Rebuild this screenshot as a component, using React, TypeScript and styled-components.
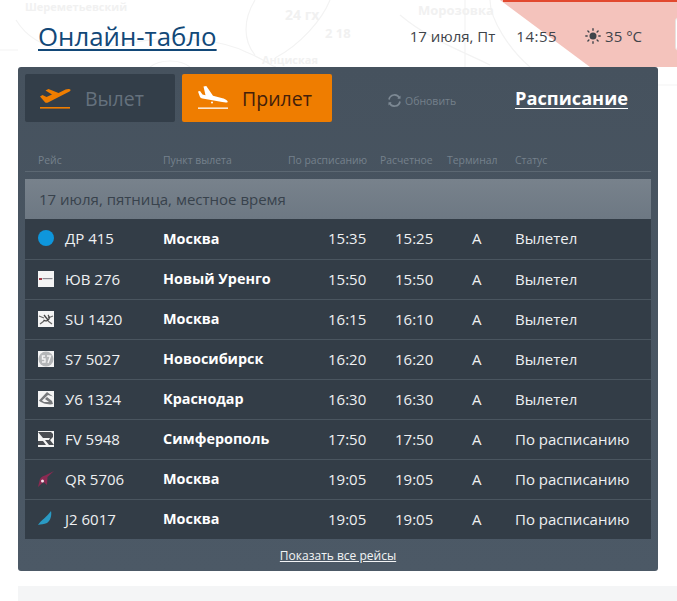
import styled, { createGlobalStyle } from "styled-components";
import type { ReactNode } from "react";

const GlobalStyle = createGlobalStyle`
  html, body {
    margin: 0;
    padding: 0;
    background: #fff;
  }
  body {
    font-family: "Open Sans", "Liberation Sans", sans-serif;
  }
`;

const Page = styled.div`
  position: relative;
  width: 677px;
  height: 601px;
  overflow: hidden;
  background: #fff;
`;

const MapBackdrop = styled.svg`
  position: absolute;
  left: 0;
  top: 0;
  width: 677px;
  height: 120px;
`;

const MapLabel = styled.text<{ $size?: number }>`
  font-family: "Open Sans", sans-serif;
  font-size: ${({ $size }) => $size ?? 13}px;
  font-weight: 700;
  fill: #f1f1f1;
  stroke: none;
`;

const Corner = styled.div`
  position: absolute;
  left: 0;
  top: 0;
  width: 677px;
  height: 67px;
  background: #f4c3bc;
  clip-path: polygon(500px 0, 677px 0, 677px 67px, 590px 67px);
`;

const CornerStrip = styled.div`
  position: absolute;
  left: 503px;
  right: 0;
  top: 0;
  height: 2px;
  background: #e2492f;
`;

const SearchEdge = styled.div`
  position: absolute;
  right: -12px;
  top: 17px;
  width: 12px;
  height: 32px;
  background: #fff;
  border: 1px solid #e8e2e0;
  border-radius: 4px;
`;

const Content = styled.div`
  position: relative;
  display: flex;
  flex-direction: column;
  padding: 0 19px 0 18px;
`;

const Header = styled.header`
  display: flex;
  align-items: center;
  box-sizing: border-box;
  height: 67px;
  padding: 4px 16px 0 20px;
`;

const Title = styled.a`
  font-size: 25.8px;
  line-height: 30px;
  color: #124878;
  text-decoration: underline;
  text-decoration-thickness: 2px;
  text-underline-offset: 3px;
  margin-right: auto;
`;

const HeaderText = styled.span<{ $gap?: number; $wide?: boolean }>`
  font-size: 15px;
  color: #3f444a;
  margin-left: ${({ $gap }) => $gap ?? 0}px;
  letter-spacing: ${({ $wide }) => ($wide ? "0.5px" : "0")};
`;

const SunWrap = styled.span`
  display: flex;
  margin-left: 28px;
  margin-right: 4px;
`;

const Panel = styled.section`
  display: flex;
  flex-direction: column;
  height: 504px;
  padding: 7px 7px 0;
  box-sizing: border-box;
  background: linear-gradient(#46525e, #4c5966);
  border-radius: 3px;
`;

const TopBar = styled.div`
  display: flex;
  align-items: center;
  height: 48px;
`;

const Tab = styled.div<{ $active?: boolean }>`
  display: flex;
  align-items: center;
  width: 150px;
  height: 48px;
  margin-right: 7px;
  padding-left: ${({ $active }) => ($active ? 15 : 14)}px;
  box-sizing: border-box;
  border-radius: 2px;
  font-size: 19.5px;
  background: ${({ $active }) => ($active ? "#ef7d00" : "#333e49")};
  color: ${({ $active }) => ($active ? "#43200a" : "#65717d")};
`;

const TabLabel = styled.span<{ $active?: boolean }>`
  margin-left: ${({ $active }) => ($active ? 13 : 14)}px;
`;

const Refresh = styled.div`
  display: flex;
  align-items: center;
  gap: 3px;
  margin: 5px 0 0 48px;
  font-size: 10.5px;
  color: #74808b;
`;

const Schedule = styled.a`
  margin-left: auto;
  margin-right: 23px;
  font-size: 18.2px;
  font-weight: 700;
  color: #fff;
  text-decoration: underline;
  text-underline-offset: 3px;
`;

const HeadRow = styled.div`
  display: grid;
  grid-template-columns: 125px 125px 92px 67px 68px 1fr;
  align-items: center;
  height: 50px;
  padding: 26px 0 0 13px;
  box-sizing: border-box;
  font-size: 10.4px;
  color: #75818c;
  border-bottom: 1px solid #5c6873;
`;

const DateBand = styled.div`
  display: flex;
  align-items: center;
  height: 40px;
  margin-top: 7px;
  padding-left: 14px;
  background: linear-gradient(#78828c, #6d7883);
  color: #38424c;
  font-size: 15px;
`;

const Table = styled.div`
  display: flex;
  flex-direction: column;
  background: #333d47;
`;

const Row = styled.div`
  display: grid;
  grid-template-columns: 27px 98px 165px 67px 77px 43px 1fr;
  align-items: center;
  height: 40px;
  box-sizing: border-box;
  padding: 0 0 2px 13px;
  font-size: 15px;
  color: #eef0f2;
  & + & {
    border-top: 1px solid #4a555f;
  }
`;

const City = styled.span`
  font-size: 14.4px;
  font-weight: 700;
  color: #fff;
`;

const LogoBox = styled.span<{ $plain?: boolean }>`
  display: flex;
  align-items: center;
  justify-content: center;
  width: 16px;
  height: 16px;
  background: ${({ $plain }) => ($plain ? "transparent" : "#f4f4f4")};
`;

const Footer = styled.div`
  display: flex;
  justify-content: center;
  align-items: center;
  flex: 1;
`;

const ShowAll = styled.a`
  font-size: 12px;
  color: #f2f4f5;
  text-decoration: underline;
`;

const BottomBlock = styled.div`
  height: 40px;
  margin: 15px -19px 0 0;
  background: #f4f5f6;
`;

const TakeoffIcon = () => (
  <svg width="32" height="24" viewBox="0 0 32 24">
    <path
      fill="#ef7d00"
      d="M1 10.500 3.500 9l4 2L13 8.500 6.500 4.500 9.500 3l10 4 7-3.400c2-.9 4.400-.8 5 .1.400.8-.6 1.600-2 2.400L9 16.500c-1 .5-2 .4-2.800-.1z"
    />
    <rect x="1" y="21" width="30" height="1.600" fill="#ef7d00" />
  </svg>
);

const LandingIcon = () => (
  <svg width="32" height="24" viewBox="0 0 32 24">
    <path
      fill="#fff"
      d="M1 5.500 3 5l2.500 3.500 3 .8L6.500 0.500 9.300 0l6.700 9.800 9.500 2.500c3 .8 5.500 2.600 5.200 3.600-.3.800-2.800.8-5.500.2L5.500 12.500c-1.500-.4-2.300-1-2.700-2z"
    />
    <circle cx="15" cy="16.500" r="1" fill="#fff" />
    <rect x="1" y="21.500" width="30" height="1.300" fill="#fff" />
  </svg>
);

const SunIcon = () => (
  <svg width="16" height="16" viewBox="0 0 16 16" fill="#3f444a">
    <circle cx="8" cy="8" r="3.500" />
    <g stroke="#3f444a" strokeWidth="1.400" strokeLinecap="round">
      <path d="M8 .8v1.400M8 13.800v1.400M.8 8h1.400M13.800 8h1.400M2.900 2.900l1 1M12.100 12.100l1 1M2.900 13.100l1-1M12.100 3.900l1-1" />
    </g>
  </svg>
);

const RefreshIcon = () => (
  <svg width="15" height="15" viewBox="0 0 15 15" fill="none" stroke="#7d8994" strokeWidth="1.700">
    <path d="M2 6.500A5.600 5.600 0 0 1 12.500 5" />
    <path d="M13 8.500A5.600 5.600 0 0 1 2.500 10" />
    <path d="M13.500 2.500v3.200h-3.200" fill="#7d8994" stroke="none" />
    <path d="M1.500 12.500V9.300h3.200" fill="#7d8994" stroke="none" />
  </svg>
);

const logos: Record<string, ReactNode> = {
  dot: (
    <LogoBox $plain>
      <svg width="16" height="16" viewBox="0 0 16 16">
        <circle cx="8" cy="8" r="8" fill="#0e96dc" />
      </svg>
    </LogoBox>
  ),
  yug: (
    <LogoBox>
      <svg width="16" height="16" viewBox="0 0 16 16">
        <rect x="1" y="7" width="3" height="2" fill="#a23c48" />
        <rect x="4.500" y="7" width="10" height="1.200" fill="#8a8a92" />
      </svg>
    </LogoBox>
  ),
  su: (
    <LogoBox>
      <svg width="16" height="16" viewBox="0 0 16 16" fill="none" stroke="#666" strokeWidth="1.300">
        <path d="M1 5 6 7M15 5l-5 2M2 13l4-3M14 13l-4-3" />
        <path d="M5.500 9a3.500 3.500 0 0 0 5.500-1c.7-1.500 0-3-1-4" stroke="#444" />
        <path d="M6 4 10 9" stroke="#444" />
      </svg>
    </LogoBox>
  ),
  s7: (
    <LogoBox>
      <svg width="16" height="16" viewBox="0 0 16 16">
        <circle cx="8" cy="8" r="7.500" fill="#b4b6b8" />
        <path fill="none" stroke="#f4f4f4" strokeWidth="1.400" d="M7 5H4.500v3H7v3H4M9 5h3.500L10 12" />
      </svg>
    </LogoBox>
  ),
  u6: (
    <LogoBox>
      <svg width="16" height="16" viewBox="0 0 16 16">
        <path
          fill="#77797c"
          d="M9 1 1 9.500c2 2.500 10 5 14 3.500l-1-3-5-4-2 2 4 3H6L4 9.500 10 4l5 1.500z"
        />
      </svg>
    </LogoBox>
  ),
  fv: (
    <LogoBox>
      <svg width="16" height="16" viewBox="0 0 16 16">
        <path fill="#4a4d52" d="M0 1h13l2 2v3l-3 3 4 5H11L7 9h4l1-2H5zM0 10h5l3 4H0z" />
      </svg>
    </LogoBox>
  ),
  qr: (
    <LogoBox $plain>
      <svg width="16" height="16" viewBox="0 0 16 16">
        <path fill="#8a2a52" d="M0 16 2 8c1-2 3-3 5-3.500L16 0 9.500 6l-.5 8-3.500-3z" />
        <circle cx="4.500" cy="10" r="1.500" fill="#f5e3ea" />
      </svg>
    </LogoBox>
  ),
  j2: (
    <LogoBox $plain>
      <svg width="16" height="16" viewBox="0 0 16 16">
        <path fill="#2a9ac4" d="M0 14C3 9 9 6 13 0c1 4-.5 10-4 12-3 1.500-6 1-9 2z" />
      </svg>
    </LogoBox>
  ),
};

const flights = [
  { logo: "dot", no: "ДР 415", city: "Москва", plan: "15:35", calc: "15:25", status: "Вылетел" },
  { logo: "yug", no: "ЮВ 276", city: "Новый Уренго", plan: "15:50", calc: "15:50", status: "Вылетел" },
  { logo: "su", no: "SU 1420", city: "Москва", plan: "16:15", calc: "16:10", status: "Вылетел" },
  { logo: "s7", no: "S7 5027", city: "Новосибирск", plan: "16:20", calc: "16:20", status: "Вылетел" },
  { logo: "u6", no: "У6 1324", city: "Краснодар", plan: "16:30", calc: "16:30", status: "Вылетел" },
  { logo: "fv", no: "FV 5948", city: "Симферополь", plan: "17:50", calc: "17:50", status: "По расписанию" },
  { logo: "qr", no: "QR 5706", city: "Москва", plan: "19:05", calc: "19:05", status: "По расписанию" },
  { logo: "j2", no: "J2 6017", city: "Москва", plan: "19:05", calc: "19:05", status: "По расписанию" },
];

export default function App() {
  return (
    <Page>
      <GlobalStyle />
      <MapBackdrop viewBox="0 0 677 120" fill="none" stroke="#f3f3f3" strokeWidth="1.200">
        <path d="M0 50h18M16 20c25 40 70 30 120 22s90 0 110 10c20 8 25 14 30 15" />
        <path d="M255 0c-12 20-12 40 0 55M330 0c-8 20-30 45-55 58M465 0v67M400 15c30 25 60 35 90 50" />
        <path d="M190 67c-10-8-30-8-40 0M490 0c0 20 20 50 40 67M658 85h19" />
        <MapLabel x="25" y="11" $size={11}>
          Шереметьевский
        </MapLabel>
        <MapLabel x="418" y="15">
          Морозовка
        </MapLabel>
        <MapLabel x="285" y="20" $size={14}>
          24 гх
        </MapLabel>
        <MapLabel x="325" y="38">
          2 18
        </MapLabel>
        <MapLabel x="262" y="64" $size={11}>
          Анциская
        </MapLabel>
      </MapBackdrop>
      <Corner />
      <CornerStrip />
      <SearchEdge />
      <Content>
        <Header>
          <Title>Онлайн-табло</Title>
          <HeaderText>17 июля, Пт</HeaderText>
          <HeaderText $gap={21} $wide>
            14:55
          </HeaderText>
          <SunWrap>
            <SunIcon />
          </SunWrap>
          <HeaderText>35 °C</HeaderText>
        </Header>
        <Panel>
          <TopBar>
            <Tab>
              <TakeoffIcon />
              <TabLabel>Вылет</TabLabel>
            </Tab>
            <Tab $active>
              <LandingIcon />
              <TabLabel $active>Прилет</TabLabel>
            </Tab>
            <Refresh>
              <RefreshIcon />
              Обновить
            </Refresh>
            <Schedule>Расписание</Schedule>
          </TopBar>
          <HeadRow>
            <span>Рейс</span>
            <span>Пункт вылета</span>
            <span>По расписанию</span>
            <span>Расчетное</span>
            <span>Терминал</span>
            <span>Статус</span>
          </HeadRow>
          <DateBand>17 июля, пятница, местное время</DateBand>
          <Table>
            {flights.map((f) => (
              <Row key={f.no}>
                {logos[f.logo]}
                <span>{f.no}</span>
                <City>{f.city}</City>
                <span>{f.plan}</span>
                <span>{f.calc}</span>
                <span>А</span>
                <span>{f.status}</span>
              </Row>
            ))}
          </Table>
          <Footer>
            <ShowAll>Показать все рейсы</ShowAll>
          </Footer>
        </Panel>
        <BottomBlock />
      </Content>
    </Page>
  );
}
